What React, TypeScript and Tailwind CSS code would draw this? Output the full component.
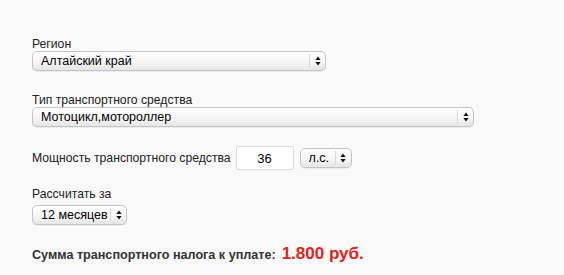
import React, { useState } from "react";

function Arrows() {
  return (
    <svg width="6" height="10" viewBox="0 0 6 10" className="block">
      <path d="M3 0.5 L5.6 4 L0.4 4 Z" fill="#111" />
      <path d="M3 9.5 L5.6 6 L0.4 6 Z" fill="#111" />
    </svg>
  );
}

type SelectProps = {
  value: string;
  options: string[];
  onChange: (v: string) => void;
  className: string;
};

function MacSelect({ value, options, onChange, className }: SelectProps) {
  return (
    <div
      className={`relative h-[20px] rounded-[5px] border border-[#c4c4c4] bg-gradient-to-b from-white via-[#f7f7f7] to-[#e6e6e6] shadow-[0_1px_1px_rgba(0,0,0,0.06)] ${className}`}
    >
      <select
        value={value}
        onChange={(e) => onChange(e.target.value)}
        className="h-full w-full appearance-none bg-transparent pl-[8px] pr-[16px] text-[12.5px] leading-[18px] text-black outline-none"
      >
        {options.map((o) => (
          <option key={o}>{o}</option>
        ))}
      </select>
      <div className="pointer-events-none absolute right-0 top-[2px] bottom-[2px] flex w-[16px] items-center justify-center border-l border-[#d8d8d8]">
        <Arrows />
      </div>
    </div>
  );
}

export default function App() {
  const [region, setRegion] = useState("Алтайский край");
  const [type, setType] = useState("Мотоцикл,мотороллер");
  const [power, setPower] = useState("36");
  const [unit, setUnit] = useState("л.с.");
  const [period, setPeriod] = useState("12 месяцев");

  return (
    <div
      className="min-h-screen bg-[#f9f9f9] pl-[32px] pt-[37px] text-[12.2px] text-[#222]"
      style={{ fontFamily: '"Liberation Sans", Arial, sans-serif' }}
    >
      <div className="leading-[14px]">Регион</div>
      <MacSelect
        value={region}
        options={["Алтайский край", "Московская область", "Санкт-Петербург"]}
        onChange={setRegion}
        className="w-[294px]"
      />

      <div className="mt-[22px] leading-[14px]">Тип транспортного средства</div>
      <MacSelect
        value={type}
        options={["Мотоцикл,мотороллер", "Легковой автомобиль", "Грузовой автомобиль"]}
        onChange={setType}
        className="w-[442px]"
      />

      <div className="mt-[19px] flex items-center">
        <span className="mr-[5px]">Мощность транспортного средства</span>
        <input
          value={power}
          onChange={(e) => setPower(e.target.value)}
          className="h-[24px] w-[58px] rounded-[2px] border border-[#dadada] bg-white text-center text-[13px] text-black outline-none"
        />
        <MacSelect
          value={unit}
          options={["л.с.", "кВт"]}
          onChange={setUnit}
          className="ml-[6px] w-[52px]"
        />
      </div>

      <div className="mt-[17px] leading-[14px]">Рассчитать за</div>
      <MacSelect
        value={period}
        options={["12 месяцев", "6 месяцев", "3 месяца"]}
        onChange={setPeriod}
        className="mt-[4px] w-[95px]"
      />

      <div className="mt-[16px] flex items-baseline font-bold">
        <span className="text-[12.6px] text-[#333]">Сумма транспортного налога к уплате:</span>
        <span className="ml-[6px] text-[17px] text-[#e2231a]">1.800 руб.</span>
      </div>
    </div>
  );
}
